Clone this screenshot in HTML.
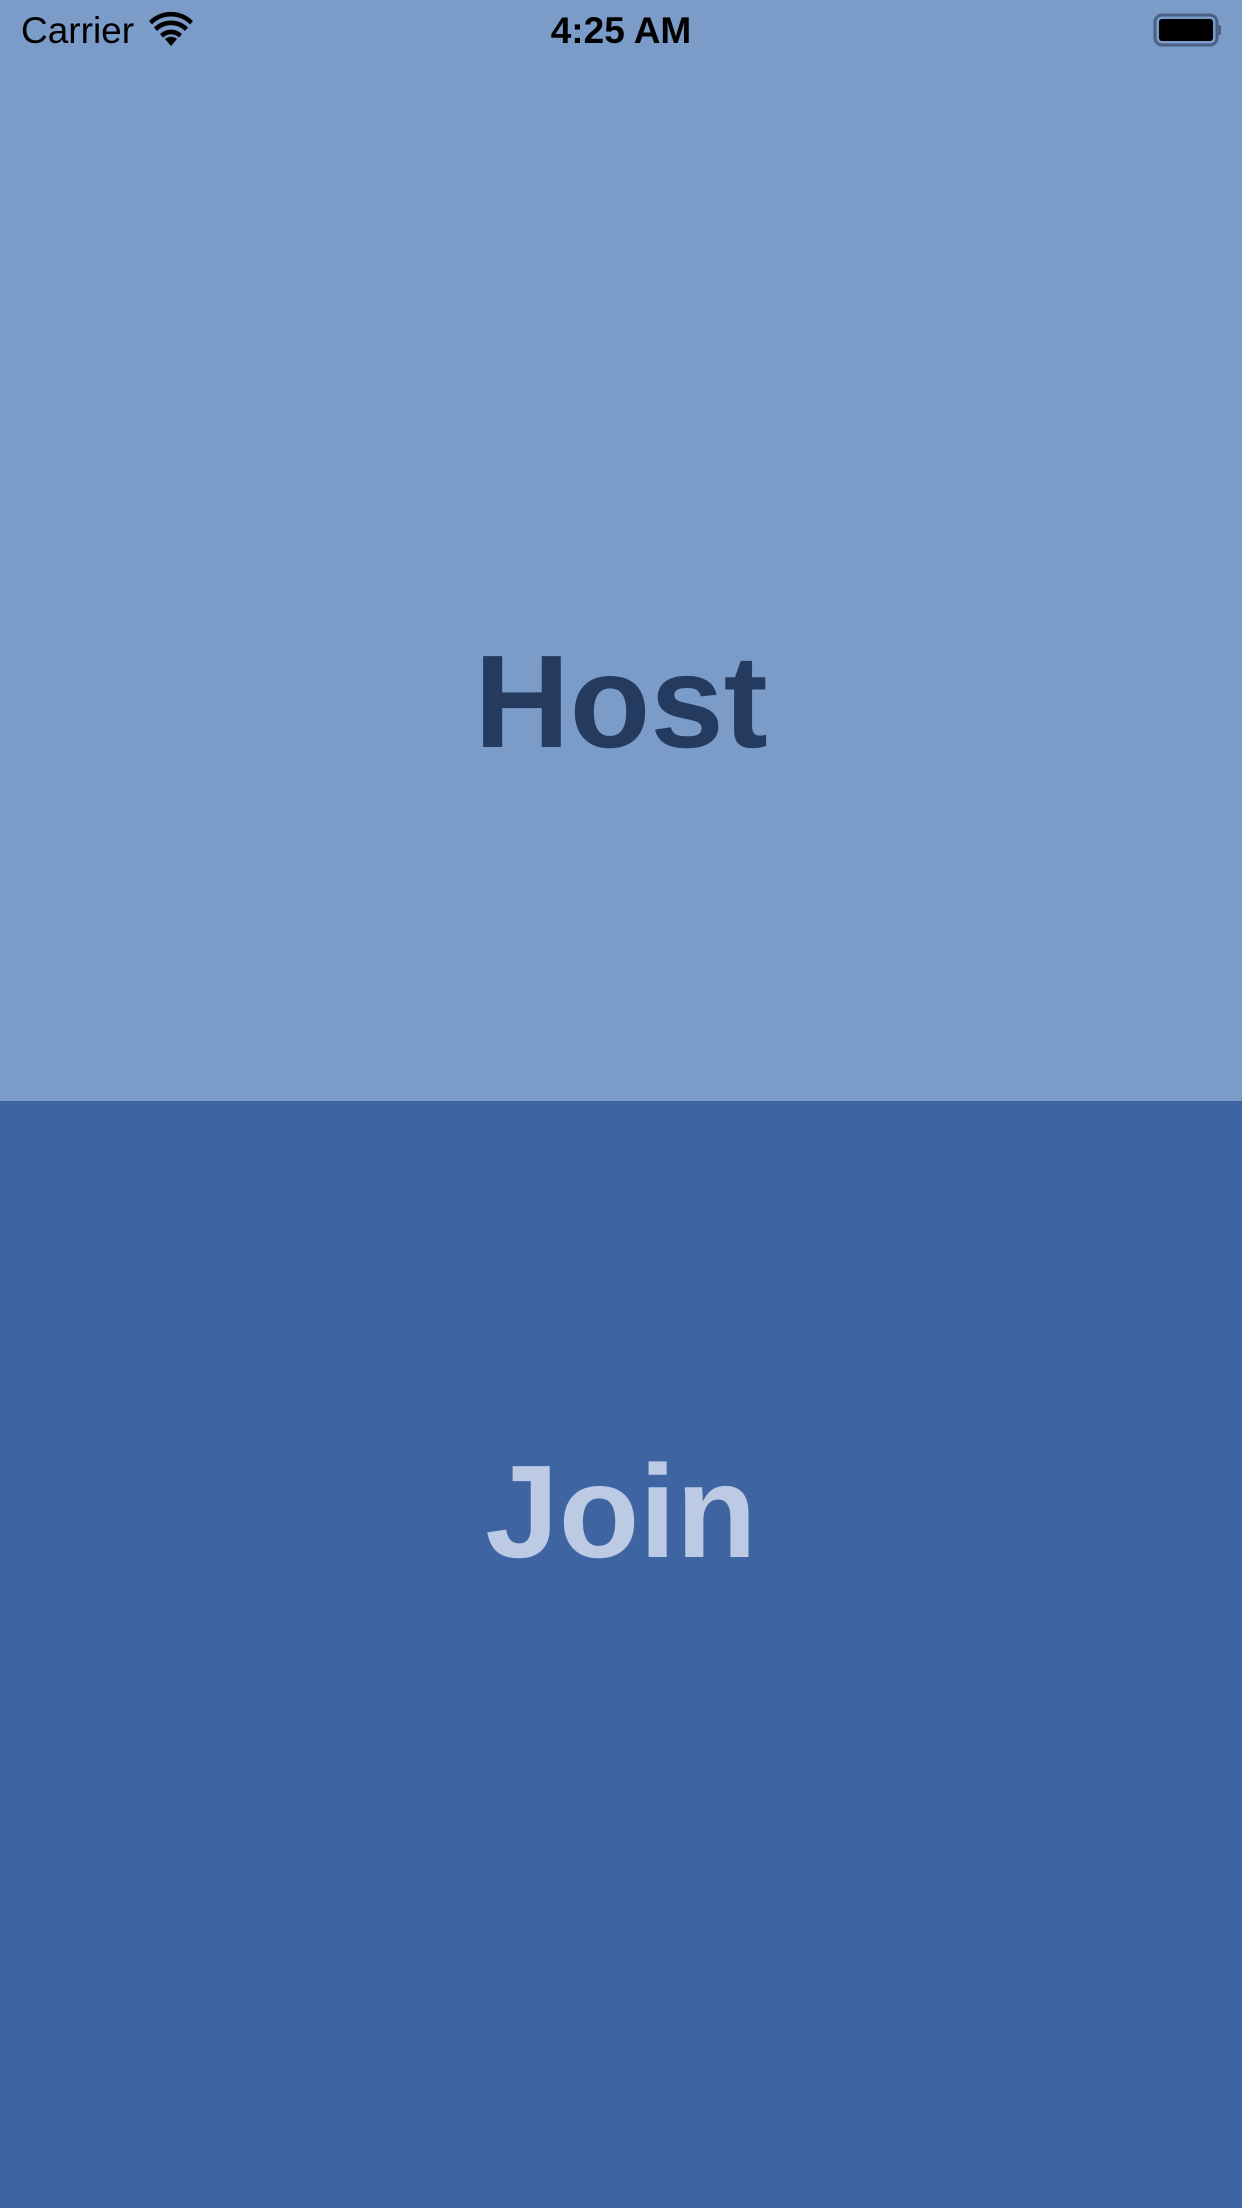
<!DOCTYPE html>
<html><head><meta charset="utf-8"><style>
html,body{margin:0;padding:0;width:1242px;height:2208px;overflow:hidden;font-family:"Liberation Sans",sans-serif}
.top{position:absolute;left:0;top:0;width:1242px;height:1101px;background:#7b9bc9}
.bot{position:absolute;left:0;top:1101px;width:1242px;height:1107px;background:#3e65a2}
.lbl{position:absolute;left:0;width:1242px;text-align:center;font-size:132px;line-height:1;font-weight:bold}
.sb{position:absolute;top:10px;font-size:37px;line-height:42px;color:#000}
</style></head><body>
<div class="top"></div><div class="bot"></div>
<div class="sb" style="left:21px">Carrier</div>
<svg style="position:absolute;left:148px;top:12px" width="46" height="36" viewBox="0 0 46 36">
<path d="M23 34 L17 27 A9 9 0 0 1 29 27 Z" fill="#000"/>
<path d="M12 22 A16 16 0 0 1 34 22 L31 25.5 A11.5 11.5 0 0 0 15 25.5 Z" fill="#000"/>
<path d="M6 15.5 A24 24 0 0 1 40 15.5 L37 19 A19.5 19.5 0 0 0 9 19 Z" fill="#000"/>
<path d="M1 9 A31 31 0 0 1 45 9 L42 12.5 A26.5 26.5 0 0 0 4 12.5 Z" fill="#000"/>
</svg>
<div class="sb" style="left:0;width:1242px;text-align:center;font-weight:bold;font-size:37px">4:25 AM</div>
<svg style="position:absolute;left:1153px;top:13px" width="70" height="34" viewBox="0 0 70 34">
<rect x="2" y="2" width="62" height="30" rx="7" fill="none" stroke="#4a5f86" stroke-width="3"/>
<rect x="6" y="6" width="54" height="22" rx="3" fill="#000"/>
<rect x="65" y="12" width="3" height="10" rx="1.5" fill="#4a5f86"/>
</svg>
<div class="lbl" style="top:636px;color:#243a5e">Host</div>
<div class="lbl" style="top:1446px;color:#bccbe3">Join</div>
</body></html>
